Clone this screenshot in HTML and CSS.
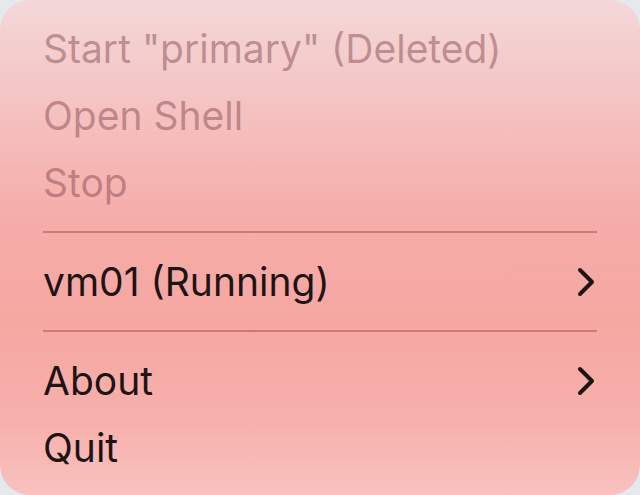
FILE: index.html
```html
<!DOCTYPE html>
<html>
<head>
<meta charset="utf-8">
<link rel="stylesheet" href="styles.css">
</head>
<body>
<div class="menu">
  <div class="item disabled">Start "primary" (Deleted)</div>
  <div class="item disabled">Open Shell</div>
  <div class="item disabled">Stop</div>
  <div class="sep"></div>
  <div class="item"><span>vm01 (Running)</span>
    <svg class="chev" width="18" height="30" viewBox="0 0 18 30"><path d="M3 3 L15 15 L3 27" fill="none" stroke="#1e1414" stroke-width="4" stroke-linecap="round" stroke-linejoin="round"/></svg>
  </div>
  <div class="sep"></div>
  <div class="item"><span>About</span>
    <svg class="chev" width="18" height="30" viewBox="0 0 18 30"><path d="M3 3 L15 15 L3 27" fill="none" stroke="#1e1414" stroke-width="4" stroke-linecap="round" stroke-linejoin="round"/></svg>
  </div>
  <div class="item">Quit</div>
</div>
</body>
</html>
```
FILE: styles.css
```css
html, body {
  margin: 0;
  padding: 0;
  background: #e6e9ec;
}
.menu {
  width: 640px;
  height: 495px;
  box-sizing: border-box;
  border-radius: 30px;
  padding: 15px 43px 0 43px;
  display: flex;
  flex-direction: column;
  background: linear-gradient(180deg, #f3d8d8 0%, #f4c4c3 20%, #f5aca8 45%, #f6a7a2 65%, #f7b0ac 85%, #f8c2bf 100%);
  font-family: Inter, "Noto Sans", sans-serif;
  font-size: 39px;
  color: #1e1414;
}
.item {
  height: 67px;
  flex: none;
  display: flex;
  align-items: center;
  justify-content: space-between;
  line-height: 1;
}
.disabled {
  color: rgba(125, 60, 70, 0.45);
}
.sep {
  height: 32px;
  flex: none;
  display: flex;
  align-items: center;
}
.sep::before {
  content: "";
  display: block;
  width: 100%;
  height: 1.5px;
  background: rgba(170, 80, 80, 0.55);
}
.chev {
  display: block;
  margin-right: 2px;
}
```
